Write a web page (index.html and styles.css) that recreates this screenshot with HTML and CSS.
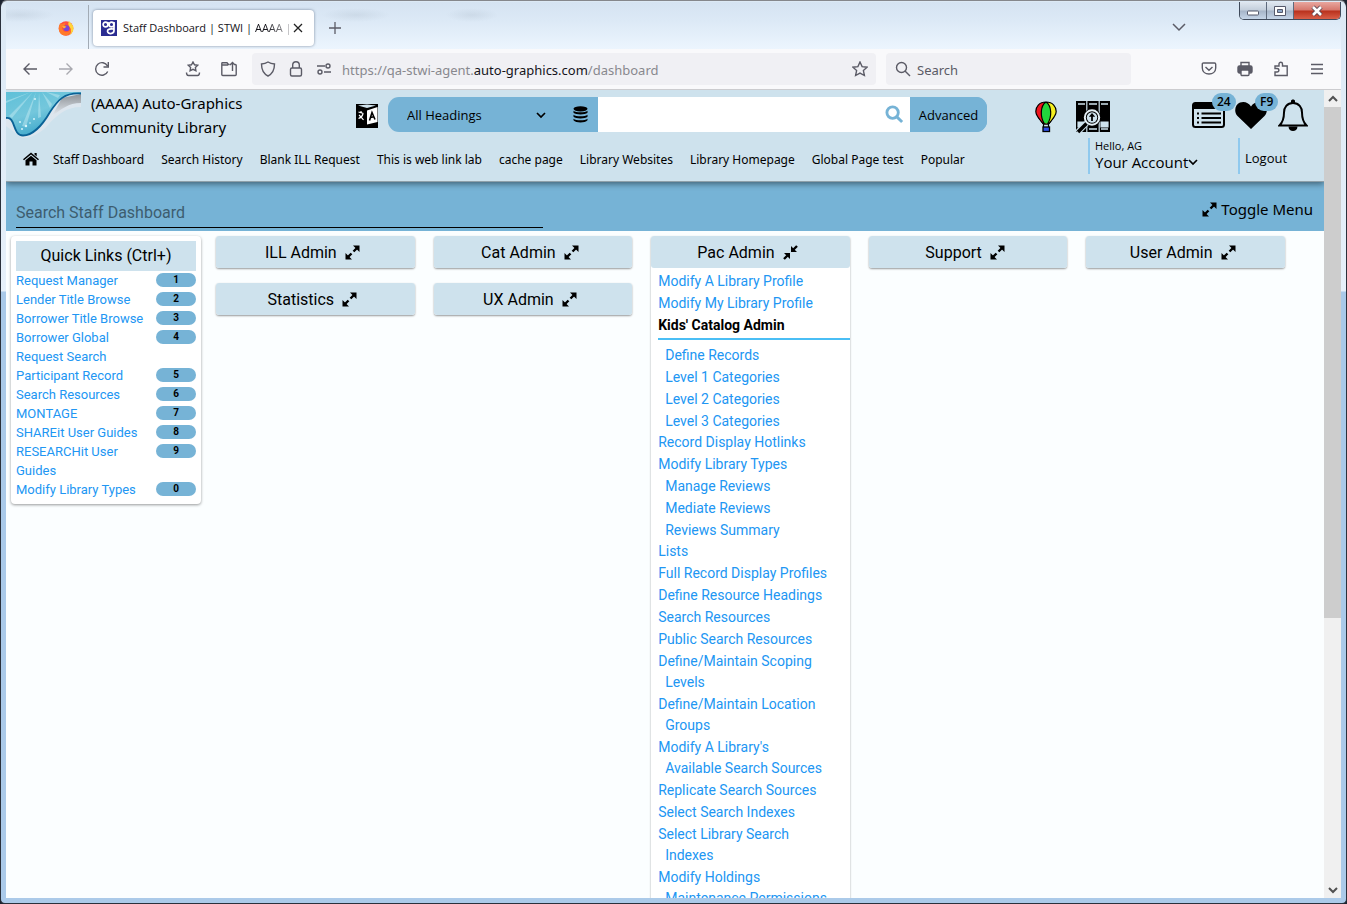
FILE: index.html
```html
<!DOCTYPE html>
<html lang="en">
<head>
<meta charset="utf-8">
<title>Staff Dashboard | STWI | AAAA</title>
<link rel="stylesheet" href="styles.css">
</head>
<body>
<svg class="defs" aria-hidden="true">
  <symbol id="expand" viewBox="0 0 15 15"><path d="M8 .5h6.500V7zM.5 8v6.500H7z"/><path d="M12 3 8.500 6.500M6.500 8.500 3 12" stroke="currentColor" stroke-width="2.400"/></symbol>
  <symbol id="collapse" viewBox="0 0 15 15"><path d="M8 1v6h6zM1 8h6v6z"/><path d="M10 5l4-4M5 10l-4 4" stroke="currentColor" stroke-width="2.400"/></symbol>
  <symbol id="chevron" viewBox="0 0 12 12"><path d="M2 4l4 4 4-4" fill="none" stroke="currentColor" stroke-width="1.700"/></symbol>
  <symbol id="lens" viewBox="0 0 20 20"><circle cx="8" cy="8" r="6"/><path d="M12.500 12.500 18 18"/></symbol>
</svg>
<div class="window">
  <div class="tabbar">
    <svg class="firefox" viewBox="0 0 16 16"><circle cx="8" cy="8.500" r="7.300" fill="#ff4f3c"/><path d="M11 .5c.3 2 2.800 2.700 4 5.500 1.500 4-.8 8-4 9.200 1.500-1.400 2.200-3 2-5.200-.3-3-3-4-2.700-6.500z" fill="#ffd43a"/><path d="M2 3.500 4.500 4c1-.8 2-1 3-1L6.500 5.500 4 7.500c0 3 2.500 5 5 4.500 2-.3 3.500-1.700 3.800-3.500.8 3-1.300 6.800-5 7C3 15.500.5 12 .8 8c.1-1.800.6-3.300 1.200-4.500z" fill="#ff7a2a"/><circle cx="8.500" cy="8.200" r="2.900" fill="#7a45d6"/><path d="M4 6.500c1.500-1 3-.7 4.500.3L6 8.500z" fill="#ffb22e"/></svg>
    <span class="tab-sep"></span>
    <div class="tab">
      <svg class="favicon" viewBox="0 0 16 16"><rect width="16" height="16" fill="#2b2d92"/><g fill="none" stroke="#fff" stroke-width="1.700"><circle cx="4.500" cy="4.500" r="2.400"/><circle cx="10.500" cy="4.500" r="2.400"/><path d="M13 2v8.500c0 4-6.500 4-6.500.5 0-2 3-2.500 6-2M7 2v4"/></g></svg>
      <span class="tab-title">Staff Dashboard | STWI | <span class="fade">AAAA |</span></span>
      <button class="bare" aria-label="Close tab"><svg class="s12" viewBox="0 0 12 12"><path d="M2 2l8 8M10 2l-8 8" stroke="#222" stroke-width="1.300"/></svg></button>
    </div>
    <button class="bare newtab" aria-label="New tab"><svg class="s14" viewBox="0 0 14 14"><path d="M7 1v12M1 7h12" stroke="#5b5b66" stroke-width="1.300"/></svg></button>
    <button class="bare alltabs" aria-label="List all tabs"><svg class="s14" viewBox="0 0 14 14"><path d="M1 4l6 6 6-6" fill="none" stroke="#5b5b66" stroke-width="1.500"/></svg></button>
    <div class="winctl">
      <button class="wc" aria-label="Minimize"><svg class="s14" viewBox="0 0 14 14"><rect x="1.500" y="7" width="11" height="4" rx=".8" fill="#fff" stroke="#55596b"/></svg></button>
      <button class="wc" aria-label="Maximize"><svg class="s14" viewBox="0 0 14 14"><path d="M1.500 2.500h11v9h-11z" fill="#fff" stroke="#55596b"/><path d="M4.500 5.500h5v3h-5z" fill="#8fa8c8" stroke="#55596b"/></svg></button>
      <button class="wc close" aria-label="Close"><svg class="s14" viewBox="0 0 14 14"><path d="M3 3l8 8M11 3l-8 8" stroke="#5a4550" stroke-width="4.500"/><path d="M3 3l8 8M11 3l-8 8" stroke="#fff" stroke-width="2.600"/></svg></button>
    </div>
  </div>
  <div class="toolbar">
    <div class="nav-btns">
      <button class="bare" aria-label="Back"><svg class="s16" viewBox="0 0 16 16"><path d="M15 8H2M7.500 2.500 2 8l5.500 5.500"/></svg></button>
      <button class="bare dim" aria-label="Forward"><svg class="s16" viewBox="0 0 16 16"><path d="M1 8h13M8.500 2.500 14 8l-5.500 5.500"/></svg></button>
      <button class="bare" aria-label="Reload"><svg class="s16" viewBox="0 0 16 16"><path d="M13.700 10.500A6.300 6.300 0 1 1 13.500 5M14.300 1v5H9.500"/></svg></button>
    </div>
    <div class="nav-btns extra">
      <button class="bare" aria-label="Bookmarks"><svg class="s16" viewBox="0 0 16 16"><path d="M8 1l1.500 2.800 3.200.5-2.300 2.200.5 3.200L8 8.300 5.100 9.700l.5-3.200L3.300 4.300l3.200-.5zM1.500 11.500c0 2 .5 3 2 3h9c1.500 0 2-1 2-3"/></svg></button>
      <button class="bare" aria-label="Open file"><svg class="s16" viewBox="0 0 16 16"><path d="M8.500 3.500h-1L6 1.800H1.500c-.4 0-.7.300-.7.700v11c0 .6.400 1 1 1h12.400c.6 0 1-.4 1-1v-9c0-.6-.4-1-1-1H14M11.500 10V1.500M9 4l2.500-2.500L14 4M1 4h6"/></svg></button>
    </div>
    <div class="field url">
      <svg class="s16" viewBox="0 0 16 16"><path d="M8 1c2 1.300 4 1.900 6.500 2 0 6-1.500 9.500-6.500 12C3 12.500 1.500 9 1.500 3 4 2.900 6 2.300 8 1z"/></svg>
      <svg class="s16" viewBox="0 0 16 16"><rect x="2.500" y="7" width="11" height="8" rx="1.500"/><path d="M4.700 7V4a3.300 3.300 0 0 1 6.600 0v3"/></svg>
      <svg class="s16" viewBox="0 0 16 16"><path d="M1 5h8M8 11h7"/><circle cx="12" cy="5" r="2"/><circle cx="4" cy="11" r="2"/></svg>
      <span class="address">https://qa-stwi-agent.<b>auto-graphics.com</b>/dashboard</span>
      <button class="bare" aria-label="Bookmark this page"><svg class="s16" viewBox="0 0 16 16"><path d="M8 1l2.100 4.600 5 .6-3.700 3.400 1 4.900L8 12.100l-4.400 2.400 1-4.900L.9 6.200l5-.6z"/></svg></button>
    </div>
    <label class="field websearch">
      <svg class="s16" viewBox="0 0 16 16"><circle cx="6.500" cy="6.500" r="5"/><path d="M10 10l5 5"/></svg>
      <input type="text" placeholder="Search" aria-label="Search the web">
    </label>
    <div class="nav-btns right">
      <button class="bare" aria-label="Pocket"><svg class="s16" viewBox="0 0 16 16"><path d="M2.500 2h11c.7 0 1.200.5 1.200 1.200V7c0 8-13.400 8-13.400 0V3.200C1.300 2.500 1.800 2 2.500 2zM4.500 6 8 9.300 11.500 6"/></svg></button>
      <button class="bare" aria-label="Print"><svg class="s16" viewBox="0 0 16 16"><path d="M4 5V1.500h8V5" /><rect x="1" y="5" width="14" height="7" rx="1.500" fill="#5b5b66"/><rect x="4" y="9" width="8" height="5.500" rx="1" fill="#f9f9fb"/></svg></button>
      <button class="bare" aria-label="Extensions"><svg class="s16" viewBox="0 0 16 16"><path d="M2 14.500V11h2c2.500 0 2.500-3.500 0-3.500H2V5h4V3c0-2.300 3.500-2.300 3.500 0v2h4.700v9.500z"/></svg></button>
      <button class="bare" aria-label="Menu"><svg class="s16" viewBox="0 0 16 16"><path d="M2 3.500h12M2 8h12M2 12.500h12"/></svg></button>
    </div>
  </div>
  <div class="viewport">
    <div class="page">
      <header class="site">
        <div class="top">
          <svg class="logo" viewBox="0 0 75 46" preserveAspectRatio="none">
            <defs>
              <linearGradient id="sea" x1="0" y1="0" x2=".6" y2="1"><stop offset="0" stop-color="#5fc0d8"/><stop offset=".5" stop-color="#74c7dc"/><stop offset="1" stop-color="#2f9fc6"/></linearGradient>
              <linearGradient id="shade" x1="0" y1="0" x2="0" y2="1"><stop offset="0" stop-color="#8d9297"/><stop offset="1" stop-color="#e6ecf2"/></linearGradient>
            </defs>
            <path d="M75 2v13C60 15 51 23 42 33 33 43 24 46 16 46L0 34V24z" fill="#dde6ee"/>
            <path d="M75 2v9C62 11 56 17 46 24L56 6z" fill="url(#shade)"/>
            <path d="M0 0h75v1C58 0 52 8 44 20 36 34 26 44 17 44 6 44 10 24 0 26z" fill="url(#sea)"/>
            <g fill="#c9edf5" opacity=".45"><path d="M25 0 0 9v2zM27 0 3 24l3 2zM30 0 16 34l4 1zM33 0l-1 26 3-1zM36 0l8 16 2-4zM40 0l12 6 2-3z"/></g>
            <g fill="#d8f5fa"><circle cx="14" cy="30" r="1"/><circle cx="20" cy="34" r="1.200"/><circle cx="28" cy="27" r="1"/><circle cx="24" cy="31" r=".8"/><circle cx="16" cy="37" r="1"/><circle cx="29" cy="7" r="1"/></g>
            <path d="M75 1.500C58 .5 52 8 44 20 36 34 26 43.500 17 43.500 6 43.500 10 24 0 26" fill="none" stroke="#0a6296" stroke-width="1.800"/>
          </svg>
          <h1 class="lib">(AAAA) Auto-Graphics Community Library</h1>
          <button class="bare translate" aria-label="Translate"><svg viewBox="0 0 22 24"><path d="M0 0h22v24H0z"/><path d="M2 1.500 11 4l9-2.500L11 .5zM2 22l4-1.500M20 22l-4-1.500" fill="#cee2ed"/><path d="M11 6.500 21.500 3v15L11 20.500z" fill="#fff"/><path d="M2.500 8l5 1.500M5 7v2M7 10c-.8 2.500-2.500 4-4.500 4.500M3 11c1.500 1.200 3 3 4.500 5" fill="none" stroke="#fff" stroke-width="1.200"/><path d="M13.500 16.500 16 8.500l3 7M14.500 13.500l3.500-.7" fill="none" stroke="#000" stroke-width="1.600"/></svg></button>
          <form class="search" onsubmit="return false">
            <div class="scope">
              <select aria-label="Search heading"><option>All Headings</option></select>
              <svg class="s12" viewBox="0 0 12 12"><use href="#chevron"/></svg>
            </div>
            <button class="bare db" aria-label="Databases"><svg viewBox="0 0 15 17"><ellipse cx="7.500" cy="2.800" rx="7" ry="2.600"/><path d="M.5 4.800c2.500 2 11.500 2 14 0v2c-2.500 2.300-11.500 2.300-14 0zM.5 8.800c2.500 2 11.500 2 14 0v2c-2.500 2.300-11.500 2.300-14 0zM.5 12.800c2.500 2 11.500 2 14 0v1.500c-2.500 3-11.500 3-14 0z"/></svg></button>
            <input type="text" aria-label="Search catalog">
            <button class="go" aria-label="Search"><svg viewBox="0 0 20 20"><use href="#lens"/></svg></button>
            <button class="adv">Advanced</button>
          </form>
          <button class="bare balloon" aria-label="Kids catalog"><svg viewBox="0 0 22 32"><path d="M8 23 3 16h16l-5 7z" fill="#b8c8b0" stroke="#000"/><path d="M11 1C4 1 .8 6 .8 10.500S6 20 8.500 23H11z" fill="#f0141e"/><path d="M11 1c7 0 10.200 5 10.200 9.500S16 20 13.500 23H11z" fill="#f4ee20"/><path d="M11 1C5.500 5 5 16 9.500 22.500h3C17 16 16.500 5 11 1z" fill="#22d63c"/><path d="M11 1C4 1 .8 6 .8 10.500S6 20 8.500 23h5c2.500-3 7.700-8 7.700-12.500S18 1 11 1zM11 1C5 5 5 16 9.500 23M11 1c6 4 6 15 1.500 22M8.500 23v4M13.500 23v4" fill="none" stroke="#000" stroke-width="1.200"/><rect x="8" y="26" width="6.500" height="4.500" fill="#2f50e8" stroke="#000" stroke-width="1.300"/></svg></button>
          <button class="bare books" aria-label="Browse shelves"><svg viewBox="0 0 34 33"><path d="M0 0h34v31H0z"/><path d="M2 3h7M13 3h8M25 3h7M2 28h3M13 28h8M25 28h7" stroke="#cee2ed" stroke-width="1.600"/><path d="M2 21h7v5H2zM25 21h7v5h-7zM10.800 0v31M23.200 0v31" stroke="#cee2ed" stroke-width="1.200" fill="#cee2ed"/><circle cx="16" cy="16.500" r="9" fill="#000"/><circle cx="16" cy="16.500" r="7.200" fill="none" stroke="#e4eff5" stroke-width="2"/><circle cx="16" cy="16.500" r="5.200" fill="#cee2ed"/><path d="M16 14v6" stroke="#000" stroke-width="1.800"/><path d="M16 12l-3.200 3.800h6.400z"/><path d="M10.500 22 1.500 31.500" stroke="#cee2ed" stroke-width="6"/><path d="M10.500 22.500 2 31" stroke="#000" stroke-width="3.500"/></svg></button>
          <button class="bare lists" aria-label="Lists"><svg viewBox="0 0 33 26"><rect x="1" y="1" width="31" height="24" rx="2.500" fill="none" stroke="#000" stroke-width="2"/><path d="M1 1h31v6H1z"/><path d="M5 11.500h2M5 16h2M5 20.500h2M9.500 11.500H29M9.500 16H29M9.500 20.500H29" stroke="#000" stroke-width="2"/></svg><span class="count">24</span></button>
          <button class="bare heart" aria-label="Favorites"><svg viewBox="0 0 32 27"><path d="M16 27 2.500 14C-1.500 10 0 2.500 5 .6 9.500-1 13.500.8 16 4.500 18.500.8 22.500-1 27 .6c5 1.900 6.500 9.400 2.500 13.400z"/></svg><span class="count">F9</span></button>
          <button class="bare bell" aria-label="Notifications"><svg viewBox="0 0 30 33"><path d="M15 4C9 4 6 8.500 6 13.500c0 6-1 9.500-4.500 13h27c-3.500-3.500-4.500-7-4.500-13C24 8.500 21 4 15 4z" fill="none" stroke="#000" stroke-width="2"/><path d="M13 4V2c0-2 4-2 4 0v2zM10.500 27.500h9c0 6-9 6-9 0z"/></svg></button>
        </div>
        <div class="bottom">
          <nav class="menu">
            <a class="homelink" href="#" aria-label="Home"><svg class="home" viewBox="0 0 16 14"><path d="M8 .5 16 7.300l-1 1L8 2.600 1 8.300l-1-1zM11.500 1h2.200v3.500l-2.200-2zM2.500 8.200 8 3.700l5.500 4.500V13.500H9.500V9.500h-3v4h-4z"/></svg></a>
            <a href="#">Staff Dashboard</a><a href="#">Search History</a><a href="#">Blank ILL Request</a><a href="#">This is web link lab</a><a href="#">cache page</a><a href="#">Library Websites</a><a href="#">Library Homepage</a><a href="#">Global Page test</a><a href="#">Popular</a>
          </nav>
          <button class="account"><span class="hello">Hello, AG</span><span class="your">Your Account<svg class="s10" viewBox="1 1 10 10"><use href="#chevron" width="12" height="12"/></svg></span></button>
          <a class="logout" href="#">Logout</a>
        </div>
      </header>
      <div class="band">
        <input type="text" placeholder="Search Staff Dashboard" aria-label="Search Staff Dashboard">
        <button class="bare toggle"><svg class="s15" viewBox="0 0 15 15"><use href="#expand"/></svg>Toggle Menu</button>
      </div>
      <main class="dash">
        <aside class="quick">
          <h2>Quick Links (Ctrl+)</h2>
          <ul>
            <li><a href="#">Request Manager</a><span class="key">1</span></li>
            <li><a href="#">Lender Title Browse</a><span class="key">2</span></li>
            <li><a href="#">Borrower Title Browse</a><span class="key">3</span></li>
            <li><a href="#">Borrower Global Request Search</a><span class="key">4</span></li>
            <li><a href="#">Participant Record</a><span class="key">5</span></li>
            <li><a href="#">Search Resources</a><span class="key">6</span></li>
            <li><a href="#">MONTAGE</a><span class="key">7</span></li>
            <li><a href="#">SHAREit User Guides</a><span class="key">8</span></li>
            <li><a href="#">RESEARCHit User Guides</a><span class="key">9</span></li>
            <li><a href="#">Modify Library Types</a><span class="key">0</span></li>
          </ul>
        </aside>
        <div class="cols">
          <div class="col">
            <section class="card"><button class="head">ILL Admin<svg class="s15" viewBox="0 0 15 15"><use href="#expand"/></svg></button></section>
            <section class="card"><button class="head">Statistics<svg class="s15" viewBox="0 0 15 15"><use href="#expand"/></svg></button></section>
          </div>
          <div class="col">
            <section class="card"><button class="head">Cat Admin<svg class="s15" viewBox="0 0 15 15"><use href="#expand"/></svg></button></section>
            <section class="card"><button class="head">UX Admin<svg class="s15" viewBox="0 0 15 15"><use href="#expand"/></svg></button></section>
          </div>
          <div class="col">
            <section class="card"><button class="head">Pac Admin<svg class="s15" viewBox="0 0 15 15"><use href="#collapse"/></svg></button>
              <ul class="links">
                <li><a href="#">Modify A Library Profile</a></li>
                <li><a href="#">Modify My Library Profile</a></li>
                <li class="group">Kids' Catalog Admin</li>
                <li class="sub"><a href="#">Define Records</a></li>
                <li class="sub"><a href="#">Level 1 Categories</a></li>
                <li class="sub"><a href="#">Level 2 Categories</a></li>
                <li class="sub"><a href="#">Level 3 Categories</a></li>
                <li><a href="#">Record Display Hotlinks</a></li>
                <li><a href="#">Modify Library Types</a></li>
                <li class="sub"><a href="#">Manage Reviews</a></li>
                <li class="sub"><a href="#">Mediate Reviews</a></li>
                <li class="sub"><a href="#">Reviews Summary</a></li>
                <li><a href="#">Lists</a></li>
                <li><a href="#">Full Record Display Profiles</a></li>
                <li><a href="#">Define Resource Headings</a></li>
                <li><a href="#">Search Resources</a></li>
                <li><a href="#">Public Search Resources</a></li>
                <li><a href="#">Define/Maintain Scoping Levels</a></li>
                <li><a href="#">Define/Maintain Location Groups</a></li>
                <li><a href="#">Modify A Library's Available&nbsp;Search Sources</a></li>
                <li><a href="#">Replicate Search Sources</a></li>
                <li><a href="#">Select Search Indexes</a></li>
                <li><a href="#">Select Library Search Indexes</a></li>
                <li><a href="#">Modify Holdings Maintenance&nbsp;Permissions</a></li>
              </ul>
            </section>
          </div>
          <div class="col">
            <section class="card"><button class="head">Support<svg class="s15" viewBox="0 0 15 15"><use href="#expand"/></svg></button></section>
          </div>
          <div class="col">
            <section class="card"><button class="head">User Admin<svg class="s15" viewBox="0 0 15 15"><use href="#expand"/></svg></button></section>
          </div>
        </div>
      </main>
    </div>
    <div class="scroll">
      <button class="bare" aria-label="Scroll up"><svg class="s12" viewBox="0 0 12 12"><path d="M2 8l4-4 4 4" fill="none" stroke="#505050" stroke-width="2"/></svg></button>
      <div class="track"><div class="thumb"></div></div>
      <button class="bare" aria-label="Scroll down"><svg class="s12" viewBox="0 0 12 12"><path d="M2 4l4 4 4-4" fill="none" stroke="#505050" stroke-width="2"/></svg></button>
    </div>
  </div>
</div>
</body>
</html>
```

FILE: styles.css
```css
* { box-sizing: border-box; }
body {
  margin: 0;
  background: #1c2430;
  font-family: "Open Sans", "Noto Sans", sans-serif;
  font-size: 12px;
  color: #000;
}
svg { display: block; flex: none; }
.defs { position: absolute; width: 0; height: 0; }
a { color: inherit; text-decoration: none; }
button, input, select { font: inherit; color: inherit; margin: 0; }
ul { list-style: none; margin: 0; padding: 0; }
.bare { background: none; border: 0; padding: 0; display: flex; align-items: center; flex: none; }
.s10 { width: 10px; height: 10px; }
.s12 { width: 12px; height: 12px; }
.s14 { width: 14px; height: 14px; }
.s15 { width: 15px; height: 15px; }
.s16 { width: 16px; height: 16px; }

.window {
  height: 100vh;
  display: flex;
  flex-direction: column;
  overflow: hidden;
  border: 1px solid #2a303b;
  border-top-color: #85878c;
  border-radius: 7px 7px 5px 5px;
  padding: 1px 5px 5px;
  background: linear-gradient(#dce9f5, #e6f0fa 290px, #a9c9e9 291px, #abcae9);
}

.tabbar {
  display: flex;
  align-items: center;
  flex: none;
  height: 47px;
  padding-left: 52px;
  background:
    radial-gradient(ellipse 34px 7px at 14px 13px, rgba(150,165,180,.2), transparent),
    radial-gradient(ellipse 34px 7px at 350px 13px, rgba(150,165,180,.2), transparent),
    radial-gradient(ellipse 26px 7px at 466px 13px, rgba(150,165,180,.2), transparent),
    linear-gradient(#d5e3f2, #dce9f6 40%, #ecf5fe);
}
.firefox { width: 16px; height: 16px; margin-top: 4px; }
.tab-sep { width: 1px; height: 44px; margin: 3px 4px 0 14px; background: #a2abb5; }
.tab {
  display: flex;
  align-items: center;
  gap: 6px;
  width: 221px;
  height: 36px;
  margin-top: 4px;
  padding: 0 10px 0 8px;
  border-radius: 4px;
  background: #fff;
  box-shadow: 0 0 3px rgba(80,95,120,.7);
}
.favicon { width: 16px; height: 16px; }
.tab-title { flex: 1; min-width: 0; white-space: nowrap; font-size: 11px; color: #15141a; }
.fade { color: transparent; background: linear-gradient(90deg, #15141a 30%, #c9c9cc); background-clip: text; }
.newtab { margin: 4px 0 0 14px; }
.alltabs { margin: 3px 53px 0 auto; }
.winctl {
  display: flex;
  align-self: flex-start;
  border: 1px solid #3f4a5b;
  border-top: 0;
  border-radius: 0 0 5px 5px;
  overflow: hidden;
}
.wc {
  display: flex;
  align-items: center;
  justify-content: center;
  width: 27px;
  height: 17px;
  padding: 0;
  border: 0;
  border-right: 1px solid #5d697c;
  background: linear-gradient(#dfe7f0, #c3cedb 48%, #a5b4c8 52%, #c5d5e8);
}
.close { width: 46px; border-right: 0; background: linear-gradient(#e8a79f, #d6776c 48%, #b8301c 52%, #d95f48); }

.toolbar {
  display: flex;
  align-items: center;
  flex: none;
  height: 41px;
  padding-left: 16px;
  background: #f9f9fb;
  border-bottom: 1px solid #cccccf;
}
.toolbar svg { fill: none; stroke: #5b5b66; stroke-width: 1.4; }
.dim { opacity: .5; }
.nav-btns { display: flex; gap: 20px; }
.extra { margin-left: 75px; }
.right { margin: 0 16px 0 auto; }
.field {
  display: flex;
  align-items: center;
  height: 32px;
  padding: 0 8px;
  border-radius: 4px;
  background: #f0f0f4;
  font-family: "Noto Sans", sans-serif;
  font-size: 13px;
}
.url { flex: 1; gap: 12px; margin-left: 15px; min-width: 0; }
.address { flex: 1; min-width: 0; margin-left: -2px; padding-top: 1px; overflow: hidden; white-space: nowrap; color: #88888e; }
.address b { font-weight: 400; color: #15141a; }
.websearch { width: 245px; gap: 6px; margin: 0 70px 0 10px; padding-left: 9px; }
.websearch input { flex: 1; min-width: 0; padding: 1px 0 0; border: 0; background: none; }
.websearch input::placeholder { color: #5b5b66; opacity: 1; }

.viewport { display: flex; flex: 1; min-height: 0; }
.page { flex: 1; min-width: 0; overflow: hidden; background: #fbfeff; }
.scroll { display: flex; flex-direction: column; flex: none; width: 17px; background: #f0f0f0; }
.scroll button { justify-content: center; width: 17px; height: 17px; }
.track { flex: 1; }
.thumb { height: 66%; background: #cdcdcd; }

.site {
  position: relative;
  padding-top: 2px;
  background: #cee2ed;
  border-bottom: 1px solid #8fa0a9;
  box-shadow: 0 2px 6px rgba(0,0,0,.45);
  font-size: 13px;
}
.top { display: flex; align-items: flex-start; height: 46px; }
.logo { width: 75px; height: 46px; }
.lib { width: 255px; margin: -1px 10px 0; padding-right: 60px; font-family: "Noto Sans", sans-serif; font-size: 15px; line-height: 24px; font-weight: 400; }
.translate { margin-top: 12px; }
.translate svg { width: 22px; height: 24px; }
.search { display: flex; flex: 1; height: 35px; margin: 5px 48px 0 10px; border-radius: 11px; overflow: hidden; background: #76b3d6; }
.scope { display: grid; align-items: center; width: 170px; flex: none; }
.scope > * { grid-area: 1 / 1; }
.scope svg { justify-self: end; margin-right: 11px; pointer-events: none; }
.scope select { appearance: none; height: 35px; padding: 0 30px 0 19px; border: 0; background: none; }
.db { width: 40px; padding-left: 15px; }
.db svg { width: 15px; height: 17px; }
.search input { flex: 1; min-width: 0; border: 0; padding: 0 8px; background: #fff; }
.go { width: 36px; padding: 0 6px 0 11px; border: 0; background: #fff; }
.go svg { width: 19px; height: 19px; fill: none; stroke: #76b3d6; stroke-width: 3; }
.adv { width: 77px; padding: 0; border: 0; background: #76b3d6; }
.balloon { margin: 9px 19px 0 0; }
.balloon svg { width: 22px; height: 32px; }
.books { margin: 9px 82px 0 0; }
.books svg { width: 34px; height: 33px; }
.lists, .heart { position: relative; margin: 10px 10px 0 0; }
.heart { margin-right: 11px; }
.lists svg { width: 33px; height: 26px; }
.heart svg { width: 32px; height: 27px; }
.bell { margin: 7px 16px 0 0; }
.bell svg { width: 30px; height: 33px; }
.count {
  position: absolute;
  left: 20px;
  top: -9px;
  padding: 0 5px;
  border-radius: 9px;
  background: #76b3d6;
  font-size: 12px;
  line-height: 18px;
  font-weight: 600;
}
.bottom { display: flex; align-items: center; padding-bottom: 7px; }
.menu { display: flex; align-items: center; flex: 1; gap: 17px; padding: 6px 0 0 17px; white-space: nowrap; font-family: "Noto Sans", sans-serif; font-size: 12px; }
.homelink { margin-right: -3px; }
.home { width: 16px; height: 14px; }
.account, .logout { height: 36px; border: 0; border-left: 2px solid #8fc9ee; background: none; padding: 0 0 0 5px; text-align: left; }
.account { width: 150px; padding-bottom: 2px; }
.hello { display: block; font-size: 11px; line-height: 14px; }
.your { display: flex; align-items: center; font-size: 15px; line-height: 18px; }
.logout { width: 86px; line-height: 40px; }

.band { display: flex; align-items: flex-end; height: 49px; padding-bottom: 3px; background: #76b3d6; }
.band input {
  width: 40%;
  height: 32px;
  margin-left: 10px;
  padding: 2px 0 0;
  border: 0;
  border-bottom: 1px solid #000;
  background: none;
  font-family: Roboto, sans-serif;
  font-size: 16px;
}
.band input::placeholder { color: #3d5d6f; opacity: 1; }
.toggle { gap: 4px; margin: 0 11px 9px auto; font-family: "Noto Sans", sans-serif; font-size: 15px; }

.dash { display: flex; align-items: flex-start; padding: 5px 39px 0 5px; font-family: Roboto, sans-serif; }
.quick { flex: none; width: 190px; padding: 5px; border-radius: 4px; background: #fff; box-shadow: 0 1px 3px rgba(0,0,0,.4); }
.quick h2 { margin: 0; font-size: 16px; line-height: 30px; font-weight: 400; text-align: center; background: #cee2ed; }
.quick li { display: flex; justify-content: space-between; align-items: flex-start; line-height: 19px; font-size: 13px; color: #2196f3; }
.quick a { max-width: 130px; }
.key { flex: none; width: 40px; margin-top: 2px; border-radius: 7px; background: #76b3d6; color: #000; font-size: 10px; line-height: 14px; font-weight: 700; text-align: center; }
.cols { display: grid; grid-template-columns: repeat(5, 1fr); gap: 19px; flex: 1; margin-left: 15px; }
.col { display: flex; flex-direction: column; gap: 15px; min-width: 0; }
.card { border-radius: 3px; background: #fff; box-shadow: 0 1px 2px rgba(0,0,0,.4); }
.head {
  display: flex;
  align-items: center;
  justify-content: center;
  gap: 8px;
  width: 100%;
  height: 32px;
  padding: 0 6px 0 0;
  border: 0;
  border-radius: 3px;
  background: #cee2ed;
  font-size: 16px;
}
.links { padding: 3px 0 0 7px; font-size: 14px; line-height: 21px; color: #2196f3; }
.links li { margin-bottom: 1px; padding: 0 10px 0 7px; text-indent: -7px; }
.links .sub { padding-left: 14px; }
.links .sub:has(+ li:not(.sub)) { margin-bottom: 0; }
.links .group { margin-bottom: 5px; padding: 0 0 2px 7px; border-bottom: 2px solid #4abef5; color: #000; font-weight: 700; }
```
